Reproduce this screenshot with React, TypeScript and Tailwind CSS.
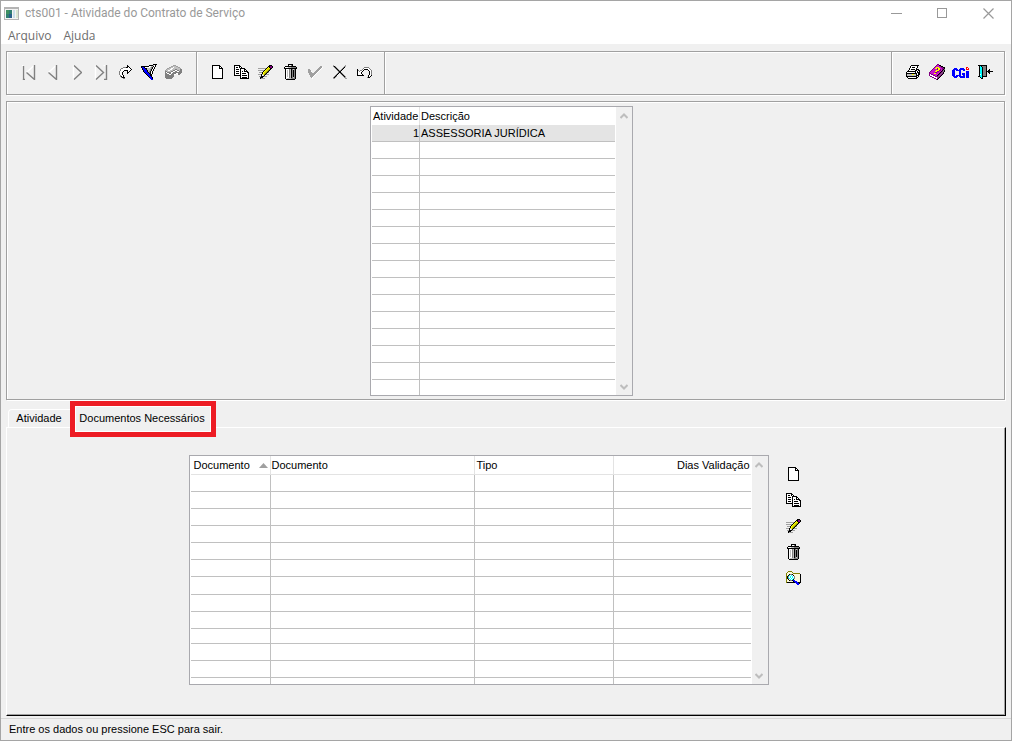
import React from "react";

const palette: Record<string, string> = {
  K: "#000000",
  W: "#ffffff",
  G: "#808080",
  A: "#a0a0a0",
  L: "#c0c0c0",
  E: "#faf7dc",
  Y: "#ffff00",
  D: "#d8d800",
  O: "#808000",
  P: "#800080",
  M: "#c814c8",
  B: "#0000ff",
  C: "#00ffff",
  R: "#ff0000",
};

const sprites = {
  doc: [
    "KKKKKKKK...",
    "KWWWWWWKK..",
    "KWWWWWWKWK.",
    "KWWWWWWKKKK",
    "KWWWWWWWWWK",
    "KWWWWWWWWWK",
    "KWWWWWWWWWK",
    "KWWWWWWWWWK",
    "KWWWWWWWWWK",
    "KWWWWWWWWWK",
    "KWWWWWWWWWK",
    "KWWWWWWWWWK",
    "KWWWWWWWWWK",
    "KKKKKKKKKKK",
  ],
  copy: [
    "KKKKKK.........",
    "KWWWWKK........",
    "KWKKWKWK.......",
    "KWWWWWKKKKK....",
    "KWKKKWKWWWKK...",
    "KWWWWWKWWWKWK..",
    "KWKKKWKWKWKKKK.",
    "KWWWWWKWWWWWWKK",
    "KWKKKWKWKKKKWWK",
    "KWWWWWKWWWWWWWK",
    "KKKKKKKWKKKKKWK",
    "......KWWWWWWWK",
    "......KWKKKKKWK",
    "......KKKKKKKKK",
  ],
  pencil: [
    "...........KKK..",
    "..........KKPPK.",
    ".........KYKPPK.",
    "AAAAAAAAKYDYKK..",
    ".......KYDDOK...",
    "AAAAAAKYDDOK....",
    ".....KYDDOK.....",
    ".AAAKYDDOKA.....",
    "....KYDOK.......",
    "AAAKLYOKAAA.....",
    "...KWLK.........",
    ".AAKKKAAA.......",
    "..KKK...........",
    "..KAAAA.........",
  ],
  trash: [
    "....KKKKK....",
    "....KWWGK....",
    ".KKKKKKKKKKK.",
    "KWWWLLLGGGGGK",
    "KKKKKKKKKKKKK",
    ".KWWWGLKGLGK.",
    ".KWLWGLKGKGK.",
    ".KWLWGLKGKGK.",
    ".KWLWGLKGKGK.",
    ".KWLWGLKGKGK.",
    ".KWLWGLKGKGK.",
    ".KWLWGLKGKGK.",
    ".KWLWGLKGKGK.",
    ".KWWWGLKGLGK.",
    ".KWLLLLGGGGK.",
    "..KKKKKKKKK..",
  ],
  check: [
    "............AA.",
    "...........AAAW",
    "..........AAAW.",
    "AA.......AAAW..",
    "AAA.....AAAW...",
    "AAAW...AAAW....",
    "AAAA..AAAW.....",
    ".AAAAAAAW......",
    ".AAAAAAW.......",
    "..AAAAW........",
    "..AAAW.........",
    "...AW..........",
    "....W..........",
  ],
  cross: [
    "A...........A.",
    "GKA........GA.",
    ".GKA......GK..",
    "..GKA....GK...",
    "...GKA..GK....",
    "....GKAGK.....",
    ".....GKK......",
    ".....GKKA.....",
    "....GK.GKA....",
    "...GK...GKA...",
    "..GK.....GKA..",
    ".GKA......GKA.",
    "GKA........GA.",
    "AA..........AA",
  ],
  undo: [
    ".......GGGGG...",
    "......GWWWWWG..",
    "K....GWKKKKWWG.",
    "KG.GGWK....KWWG",
    "KWGWWK......KWG",
    "KWWWK.......KWG",
    "KWWWK.......KWG",
    "KWWWWK......KWG",
    "KKKKKKK....KWWK",
    "...........KWK.",
    "..........GKK..",
  ],
  share: [
    "........K....",
    "........KK...",
    "....GGGKKWK..",
    "..GGWWWWWWWK.",
    ".GWWWWWWWWWWK",
    ".GWWWKKKKWWK.",
    "GWWWK...KWK..",
    "GWWK....KK...",
    "GWWK....K....",
    "GWWK.........",
    ".GWWK........",
    ".GKWK........",
    "..GKKK.......",
    "....GG.......",
  ],
  filter: [
    "............KKKK",
    "........KKKKLWK.",
    "KKKKKKKKWWLLKWK.",
    "KBBKWWWWWLGKWK..",
    ".KBBKKLLLLGKWK..",
    ".KBBBKLLLGKWK...",
    "..KBBBKLLGKWK...",
    "..KBBBKLGKWK....",
    "...KBBBKGKWK....",
    "....KBBBKKWK....",
    ".....KBBBKK.....",
    "......KBBKK.....",
    ".......KBBK.....",
    "........KBBK....",
    ".........BBK....",
    "..........BB....",
  ],
  box: [
    "........AAA......",
    "......AALLLAA....",
    "....AALLWLLLLAA..",
    "..AALLWWLLLLLLLA.",
    ".ALLLWWLLLGGLLLGG",
    "ALLWWLLLGGWWGGLGG",
    "GGLLLLGGWWGGWWGGG",
    "GWGGGGWWGGGGGGGGG",
    "GGWWGGWGGGGWWGGG.",
    "GGGGWWGGGWW.WGG..",
    "GGGGGGGGG........",
    "GGGGGGGGG........",
    "GGGGGGGG.........",
    ".GGGGGG..........",
  ],
  printer: [
    ".....KKKKKKKK.",
    "....KWWWWWWK..",
    "....KWKKKWWK..",
    "...KWWWWWWK...",
    "...KWKKKKWKKK.",
    "..KWWWWWWKKWKK",
    ".KKKKKKKKKWKWK",
    "KWWWWWWWWKWKKK",
    "KKKKKKKKKKKWKK",
    "KLLLLLYYLLKWKK",
    "KLLLLLLLLLKKK.",
    "KKKKKKKKKKKWK.",
    ".KWWWWWWWWKK..",
    "..KKKKKKKKK...",
  ],
  book: [
    "........PP......",
    ".......PMMKK....",
    "......PMMMMPKK..",
    ".....PMYYYMMPPKK",
    "....PMYYPYYMMPPK",
    "...PMMMMPYYPMPKG",
    "..PMMMMYYYPPMKGK",
    ".PMMMMYYPPMMKPGK",
    "PMMMMMPPMMMKPGK.",
    "PPMMMYYMMMKPGPK.",
    "PWPPMMMMMKPGPK..",
    "PWWWPPMMKPGPK...",
    ".PPWWWPPPGPK....",
    "...PPWWWGPK.....",
    ".....PPWPK......",
    ".......PK.......",
  ],
  cgi: [
    "..............RR..",
    "..BBB...BBBB..RWR.",
    ".BBBBB.BBBBBB.RRR.",
    "BBB.BBBBB..BB.....",
    "BBB....BB.....BBB.",
    "BBB....BB.....BBB.",
    "BBB....BB.BBB.BBB.",
    "BBB....BB.BBB.BBB.",
    "BBB.BBBBB..BB.BBB.",
    ".BBBBB.BBBBBB.BBB.",
    "..BBB...BBBBB.BBB.",
  ],
  exit: [
    "KKKKKKKKK......",
    ".KCKGGGGK......",
    ".KCCKGGGK......",
    ".KCCKGGGK......",
    ".KCCKGGGK..K...",
    ".KCCKGGGK.KK...",
    ".KCCKGGGKKKKKKK",
    ".KCCKGGGK.KK...",
    ".KCCKGGGK..K...",
    ".KWCKGGGK......",
    ".KCCKGGGK......",
    "KKCCKKKKK......",
    "..KCK..........",
    "...KK..........",
  ],
  search: [
    "..OOOO.........",
    ".OEEEEO........",
    "OEEEEEEOOOOOOO.",
    "OEEKGGKEEEEEEEK",
    "OEKCWCWKEEEEEEK",
    "OKGWCWCWGEEEEEK",
    "OKCWCWCWGEEEEEK",
    "OKGCWCWCGEEEEEK",
    "OEKWCWCKEEEEEEK",
    "OEEKGGKBBEEEEEK",
    "OEEEEEEKBBBEEEK",
    "OKKKKKKKKBBBKKK",
    "..........BBBK.",
    "...........BB..",
  ],
};

type SpriteName = keyof typeof sprites;

function Sprite({ name }: { name: SpriteName }) {
  const rows = sprites[name];
  const width = rows[0].length;
  return (
    <svg
      width={width}
      height={rows.length}
      viewBox={`0 0 ${width} ${rows.length}`}
      shapeRendering="crispEdges"
      aria-hidden="true"
      className="shrink-0"
    >
      {rows.flatMap((row, y) =>
        row.split("").map((c, x) =>
          c === "." ? null : <rect key={`${x}-${y}`} x={x} y={y} width="1" height="1" fill={palette[c]} />,
        ),
      )}
    </svg>
  );
}

function Arrow({ back, bar }: { back?: boolean; bar?: boolean }) {
  const width = bar ? 14 : 10;
  const left = back && !bar ? 4 : 0;
  return (
    <svg
      width={width}
      height="15"
      viewBox={`${left} 0 ${width} 15`}
      fill="none"
      strokeWidth="1.4"
      aria-hidden="true"
    >
      {back ? (
        <>
          {bar && <path d="M0.5 0V14" stroke="#fff" />}
          {bar && <path d="M1.5 1V14.5H3" stroke="#808080" />}
          <path d="M12 0.5L4.5 7.5" stroke="#fff" />
          <path d="M4.5 7.5L12.5 14.5V0" stroke="#808080" />
        </>
      ) : (
        <>
          <path d="M1.5 0V14.5" stroke="#fff" />
          <path d="M2 0.5L9.5 7.5L2 14.5" stroke="#808080" />
          {bar && <path d="M9.5 0.5H12" stroke="#fff" />}
          {bar && <path d="M12.5 0V14.5H10" stroke="#808080" />}
        </>
      )}
    </svg>
  );
}

function ToolButton({ label, children }: { label: string; children: React.ReactNode }) {
  return (
    <button type="button" aria-label={label} title={label} className="flex h-6 w-6 items-center justify-center">
      {children}
    </button>
  );
}

function Chevron({ down }: { down?: boolean }) {
  return (
    <svg width="8" height="6" viewBox="0 0 8 6" fill="none" stroke="#bdbdbd" strokeWidth="2" aria-hidden="true">
      <path d={down ? "M0.5 1L4 4.5L7.5 1" : "M0.5 5L4 1.5L7.5 5"} />
    </svg>
  );
}

function ScrollBar() {
  return (
    <div className="ml-px flex w-4 flex-col justify-between bg-[#f0f0f0]">
      <button type="button" aria-label="Rolar para cima" className="flex h-[18px] w-[15px] items-center justify-center">
        <Chevron />
      </button>
      <button type="button" aria-label="Rolar para baixo" className="flex h-4 w-[15px] items-center justify-center">
        <Chevron down />
      </button>
    </div>
  );
}

const cell = "border-r border-[#c0c0c0] p-0 last:border-r-0";

function ActivityGrid() {
  return (
    <div className="flex border border-[#a9a9ae] bg-white pl-px">
      <table className="w-[243px] table-fixed border-separate border-spacing-0 text-[11px] leading-4">
        <colgroup>
          <col className="w-12" />
          <col />
        </colgroup>
        <thead>
          <tr>
            <th className="h-[18px] border-r border-[#e3e3e3] p-0 pl-px text-left font-normal">Atividade</th>
            <th className="h-[18px] p-0 pl-px text-left font-normal">Descrição</th>
          </tr>
        </thead>
        <tbody>
          <tr className="bg-[#e4e4e4]">
            <td className={`${cell} h-[17px] border-b text-right`}>1</td>
            <td className={`${cell} h-[17px] border-b pl-px`}>ASSESSORIA JURÍDICA</td>
          </tr>
          {Array.from({ length: 14 }, (_, i) => (
            <tr key={i}>
              <td className={`${cell} h-[17px] border-b`} />
              <td className={`${cell} h-[17px] border-b`} />
            </tr>
          ))}
          <tr>
            <td className={`${cell} h-[15px]`} />
            <td className={`${cell} h-[15px]`} />
          </tr>
        </tbody>
      </table>
      <ScrollBar />
    </div>
  );
}

const documentRows = [
  "h-[17px]",
  "h-[17px]",
  "h-[17px]",
  "h-[17px]",
  "h-[17px]",
  "h-[17px]",
  "h-[18px]",
  "h-[17px]",
  "h-[17px]",
  "h-[15px]",
  "h-[17px]",
  "h-[17px]",
];

const head = "h-[19px] border-b border-r border-[#e3e3e3] p-0 text-left font-normal last:border-r-0";

function DocumentGrid() {
  return (
    <div className="flex border border-[#a9a9ae] bg-white pl-px">
      <table className="w-[560px] table-fixed border-separate border-spacing-0 text-[11px] leading-4">
        <colgroup>
          <col className="w-20" />
          <col className="w-[204px]" />
          <col className="w-[139px]" />
          <col />
        </colgroup>
        <thead>
          <tr>
            <th className={`${head} pl-[3px]`}>
              <span className="flex items-center justify-between pr-0.5">
                Documento
                <svg width="9" height="5" viewBox="0 0 9 5" fill="#a0a0a0" aria-hidden="true">
                  <path d="M4.5 0L9 5H0Z" />
                </svg>
              </span>
            </th>
            <th className={`${head} pl-px`}>Documento</th>
            <th className={`${head} pl-0.5`}>Tipo</th>
            <th className="h-[19px] border-b border-[#e3e3e3] p-0 pr-px text-right font-normal">Dias Validação</th>
          </tr>
        </thead>
        <tbody>
          {documentRows.map((height, i) => (
            <tr key={i}>
              {[0, 1, 2, 3].map((c) => (
                <td key={c} className={`${cell} ${height} border-b`} />
              ))}
            </tr>
          ))}
          <tr>
            {[0, 1, 2, 3].map((c) => (
              <td key={c} className={`${cell} h-[6px]`} />
            ))}
          </tr>
        </tbody>
      </table>
      <ScrollBar />
    </div>
  );
}

const sideActions: { label: string; icon: SpriteName }[] = [
  { label: "Novo documento", icon: "doc" },
  { label: "Copiar documento", icon: "copy" },
  { label: "Editar documento", icon: "pencil" },
  { label: "Excluir documento", icon: "trash" },
  { label: "Consultar documento", icon: "search" },
];

export default function App() {
  return (
    <div className="flex min-h-screen flex-col border border-[#a5a5a5] bg-[#f0f0f0] font-['Liberation_Sans',Arial,sans-serif] text-[11px] text-black">
      <header className="bg-white text-xs">
        <div className="flex h-6 items-center justify-between">
          <div className="flex items-center gap-1.5 pl-[3px] text-[#999]">
            <svg width="15" height="13" viewBox="0 0 15 13" shapeRendering="crispEdges" aria-hidden="true">
              <rect width="15" height="13" fill="#b4b4b4" />
              <rect x="1" y="2" width="13" height="10" fill="#f4f4f4" />
              <rect x="2" y="3" width="6" height="8" fill="#2f7f70" />
              <rect x="2" y="3" width="3" height="4" fill="#3f8f60" />
              <rect x="5" y="7" width="3" height="4" fill="#285f88" />
              <rect x="9" y="3" width="2" height="8" fill="#c9dfe8" />
              <rect x="12" y="3" width="2" height="8" fill="#d9e6d2" />
            </svg>
            <h1 className="font-['Roboto',sans-serif]">cts001 - Atividade do Contrato de Serviço</h1>
          </div>
          <div className="flex text-[#999]">
            <button type="button" aria-label="Minimizar" className="flex h-6 w-[46px] items-center justify-center">
              <svg width="11" height="11" shapeRendering="crispEdges" aria-hidden="true">
                <rect y="5" width="11" height="1" fill="currentColor" />
              </svg>
            </button>
            <button type="button" aria-label="Maximizar" className="flex h-6 w-[46px] items-center justify-center">
              <svg width="10" height="10" shapeRendering="crispEdges" aria-hidden="true">
                <rect x="0.5" y="0.5" width="9" height="9" fill="none" stroke="currentColor" />
              </svg>
            </button>
            <button type="button" aria-label="Fechar" className="flex h-6 w-[46px] items-center justify-center">
              <svg width="11" height="11" aria-hidden="true">
                <path d="M0.5 0.5L10.5 10.5M10.5 0.5L0.5 10.5" stroke="currentColor" strokeWidth="1.2" />
              </svg>
            </button>
          </div>
        </div>
        <nav className="flex h-[19px] items-center gap-3 pl-[7px] pt-[3px] font-['Open_Sans',sans-serif] text-[#6d6d6d]">
          <button type="button">Arquivo</button>
          <button type="button">Ajuda</button>
        </nav>
      </header>

      <main className="flex grow flex-col pl-[5px] pr-[5px] pt-[7px]">
        <div
          role="toolbar"
          aria-label="Ferramentas"
          className="mr-px flex h-11 border border-[#a0a0a0] shadow-[1px_1px_0_#fff,inset_1px_1px_0_#fff]"
        >
          <div className="flex w-[190px] items-center border-r border-[#a0a0a0] pb-0.5 pl-2.5 shadow-[1px_0_0_#fff]">
            <ToolButton label="Primeiro"><Arrow back bar /></ToolButton>
            <ToolButton label="Anterior"><Arrow back /></ToolButton>
            <ToolButton label="Próximo"><Arrow /></ToolButton>
            <ToolButton label="Último"><Arrow bar /></ToolButton>
            <ToolButton label="Ir para"><Sprite name="share" /></ToolButton>
            <ToolButton label="Filtrar"><Sprite name="filter" /></ToolButton>
            <ToolButton label="Arquivar"><Sprite name="box" /></ToolButton>
          </div>
          <div className="flex w-[188px] items-center justify-between border-r border-[#a0a0a0] px-2 pb-0.5 shadow-[1px_0_0_#fff]">
            <ToolButton label="Novo"><Sprite name="doc" /></ToolButton>
            <ToolButton label="Copiar"><Sprite name="copy" /></ToolButton>
            <ToolButton label="Editar"><Sprite name="pencil" /></ToolButton>
            <ToolButton label="Excluir"><Sprite name="trash" /></ToolButton>
            <ToolButton label="Confirmar"><Sprite name="check" /></ToolButton>
            <ToolButton label="Cancelar"><Sprite name="cross" /></ToolButton>
            <ToolButton label="Desfazer"><Sprite name="undo" /></ToolButton>
          </div>
          <div className="ml-auto flex w-[113px] items-center border-l border-[#a0a0a0] pb-0.5 pl-[9px] shadow-[inset_1px_0_0_#fff]">
            <ToolButton label="Imprimir"><Sprite name="printer" /></ToolButton>
            <ToolButton label="Manual"><Sprite name="book" /></ToolButton>
            <ToolButton label="CGI"><Sprite name="cgi" /></ToolButton>
            <ToolButton label="Sair"><Sprite name="exit" /></ToolButton>
          </div>
        </div>

        <section
          aria-label="Atividades"
          className="mr-px mt-1.5 flex justify-center border border-[#a0a0a0] pb-[3px] pr-2 pt-1 shadow-[1px_1px_0_#fff,inset_1px_1px_0_#fff]"
        >
          <ActivityGrid />
        </section>

        <div role="tablist" className="flex items-start pl-0.5 pt-1.5">
          <button
            type="button"
            role="tab"
            aria-selected="false"
            className="mt-[3px] h-[18px] w-[67px] rounded-t-sm border-l border-t border-white pr-1.5"
          >
            Atividade
          </button>
          <button
            type="button"
            role="tab"
            id="tab-documentos"
            aria-selected="true"
            aria-controls="painel-documentos"
            className="relative z-10 -mb-[5px] h-[26px] w-[136px] border border-white bg-[#f0f0f0] pb-0.5 pr-0.5 outline-5 outline-[#ed1c24]"
          >
            Documentos Necessários
          </button>
        </div>

        <section
          id="painel-documentos"
          role="tabpanel"
          aria-labelledby="tab-documentos"
          className="flex grow items-start justify-center border border-b-black border-l-white border-r-black border-t-white pb-[30px] pr-[22px] pt-[27px] shadow-[inset_-1px_-1px_0_#a0a0a0]"
        >
          <DocumentGrid />
          <div className="ml-[17px] flex flex-col pt-1.5">
            {sideActions.map((action) => (
              <button
                key={action.label}
                type="button"
                aria-label={action.label}
                title={action.label}
                className="flex h-[26px] w-4 items-center justify-center"
              >
                <Sprite name={action.icon} />
              </button>
            ))}
          </div>
        </section>
      </main>

      <footer className="mt-0.5 flex h-[22px] items-center border-t border-[#d7d7d7] pl-2">
        Entre os dados ou pressione ESC para sair.
      </footer>
    </div>
  );
}
